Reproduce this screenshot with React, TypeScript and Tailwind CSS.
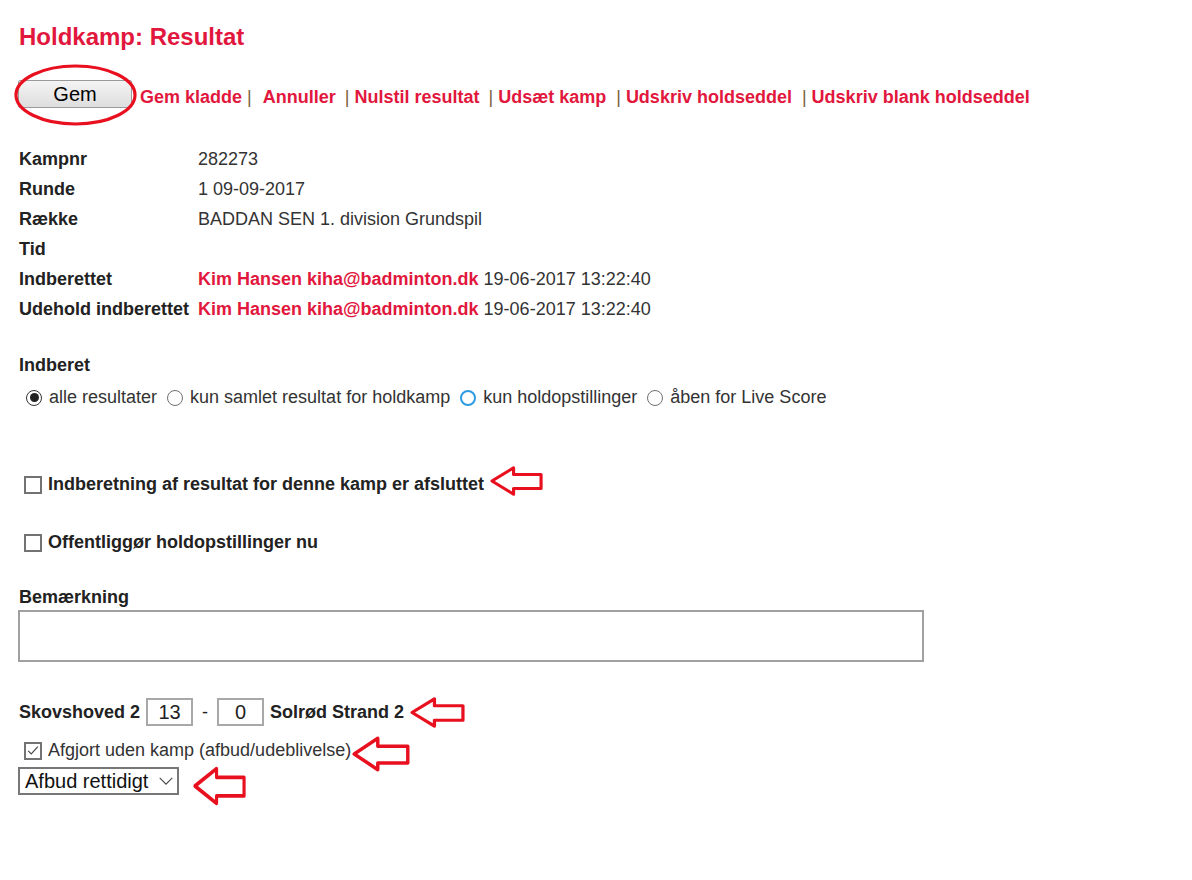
import React from "react";

const RED = "text-[#e2173d]";

function Arrow({ className }: { className: string }) {
  return (
    <svg className={`absolute ${className}`} viewBox="0 0 56 34" preserveAspectRatio="none">
      <polygon
        points="3,17 25,3 25,10 53,10 53,25 25,25 25,31"
        fill="none"
        stroke="#e8101f"
        strokeWidth="3.2"
        strokeLinejoin="round"
      />
    </svg>
  );
}

function Radio({ checked, tone }: { checked?: boolean; tone?: "blue" }) {
  const ring =
    tone === "blue" ? "border-2 border-[#2f9be0]" : checked ? "border-[1.5px] border-[#333]" : "border-[1.5px] border-[#707070]";
  return (
    <span className={`inline-flex h-[16px] w-[16px] items-center justify-center rounded-full bg-white ${ring}`}>
      {checked && <span className="h-[9px] w-[9px] rounded-full bg-[#222]" />}
    </span>
  );
}

function Box({ checked }: { checked?: boolean }) {
  return (
    <span className="inline-flex h-[18px] w-[18px] items-center justify-center border-2 border-[#737373] bg-white">
      {checked && (
        <svg viewBox="0 0 16 16" className="h-[15px] w-[15px]">
          <path d="M2.5 8.5l3.5 3.5 7.5-8.5" fill="none" stroke="#444" strokeWidth="1.3" />
        </svg>
      )}
    </span>
  );
}

const rows: [string, React.ReactNode][] = [
  ["Kampnr", "282273"],
  ["Runde", "1 09-09-2017"],
  ["Række", "BADDAN SEN 1. division Grundspil"],
  ["Tid", ""],
  [
    "Indberettet",
    <>
      <span className={`font-bold ${RED}`}>Kim Hansen kiha@badminton.dk</span> 19-06-2017 13:22:40
    </>,
  ],
  [
    "Udehold indberettet",
    <>
      <span className={`font-bold ${RED}`}>Kim Hansen kiha@badminton.dk</span> 19-06-2017 13:22:40
    </>,
  ],
];

const links = [
  ["Gem kladde", "ml-[5px] mr-[11px]"],
  ["Annuller", "ml-[9px] mr-[5px]"],
  ["Nulstil resultat", "ml-[9px] mr-[5px]"],
  ["Udsæt kamp", "ml-[10px] mr-[5px]"],
  ["Udskriv holdseddel", "ml-[10px] mr-[5px]"],
  ["Udskriv blank holdseddel", ""],
];

const radios: { label: string; checked?: boolean; tone?: "blue" }[] = [
  { label: "alle resultater", checked: true },
  { label: "kun samlet resultat for holdkamp" },
  { label: "kun holdopstillinger", tone: "blue" },
  { label: "åben for Live Score" },
];

export default function App() {
  return (
    <div
      className="relative min-h-[880px] bg-white pl-[19px] pt-[23px] text-[18px] leading-[21px] text-[#333]"
      style={{ fontFamily: '"Liberation Sans", Arial, sans-serif' }}
    >
      <h1 className={`text-[24px] font-bold leading-[28px] ${RED}`}>Holdkamp: Resultat</h1>

      {/* Toolbar */}
      <div className="mt-[29px] flex items-center">
        <button className="-ml-px h-[28px] w-[114px] rounded-[2px] border border-[#9a9a9a] bg-gradient-to-b from-[#f4f4f4] to-[#dedede] text-[20px] leading-[24px] text-black">
          Gem
        </button>
        <div className="ml-[8px] flex items-center pt-[6px]">
          {links.map(([label, gap], i) => (
            <React.Fragment key={i}>
              <span className={`font-bold ${RED}`}>{label}</span>
              {gap && <span className={`text-[#7a6040] ${gap}`}>|</span>}
            </React.Fragment>
          ))}
        </div>
      </div>

      {/* Info table */}
      <div className="mt-[36px] flex flex-col">
        {rows.map(([label, value]) => (
          <div key={label} className="flex h-[30px] items-center">
            <div className="w-[179px] font-bold text-[#222]">{label}</div>
            <div>{value}</div>
          </div>
        ))}
      </div>

      <div className="mt-[31px] font-bold text-[#222]">Indberet</div>
      <div className="mt-[11px] flex items-center pl-[7px]">
        {radios.map((r, i) => (
          <React.Fragment key={r.label}>
            <Radio checked={r.checked} tone={r.tone} />
            <span className={i < radios.length - 1 ? "ml-[7px] mr-[10px]" : "ml-[7px]"}>{r.label}</span>
          </React.Fragment>
        ))}
      </div>

      <div className="mt-[66px] flex items-center pl-[5px]">
        <Box />
        <span className="ml-[6px] font-bold text-[#222]">Indberetning af resultat for denne kamp er afsluttet</span>
      </div>
      <div className="mt-[37px] flex items-center pl-[5px]">
        <Box />
        <span className="ml-[6px] font-bold text-[#222]">Offentliggør holdopstillinger nu</span>
      </div>

      <div className="mt-[34px] font-bold text-[#222]">Bemærkning</div>
      <textarea className="-ml-px mt-[2px] block h-[52px] w-[906px] resize-none border-2 border-[#a0a0a0]" />

      {/* Score */}
      <div className="mt-[36px] flex items-center font-bold text-[#222]">
        <span>Skovshoved 2</span>
        <span className="ml-[6px] flex h-[28px] w-[47px] items-center justify-center border-2 border-[#a8a8a8] text-[20px] font-normal">
          13
        </span>
        <span className="mx-[9px] font-normal">-</span>
        <span className="flex h-[28px] w-[47px] items-center justify-center border-2 border-[#a8a8a8] text-[20px] font-normal">
          0
        </span>
        <span className="ml-[6px]">Solrød Strand 2</span>
      </div>
      <div className="mt-[14px] flex items-center pl-[5px]">
        <Box checked />
        <span className="ml-[6px]">Afgjort uden kamp (afbud/udeblivelse)</span>
      </div>
      <div className="-ml-px mt-[6px] flex h-[28px] w-[161px] items-center border-2 border-[#777] pl-[5px] text-[20px] text-[#111]">
        Afbud rettidigt
        <svg viewBox="0 0 16 10" className="ml-[10px] h-[9px] w-[16px]">
          <path d="M1 1l7 7 7-7" fill="none" stroke="#444" strokeWidth="1.2" />
        </svg>
      </div>

      {/* Annotations */}
      <svg className="absolute left-[14px] top-[64px] h-[62px] w-[123px]" viewBox="0 0 123 62">
        <ellipse cx="61.5" cy="31" rx="59.5" ry="29" fill="none" stroke="#e8101f" strokeWidth="3.2" />
      </svg>
      <Arrow className="left-[489px] top-[465px] h-[32px] w-[55px]" />
      <Arrow className="left-[409px] top-[696px] h-[33px] w-[57px]" />
      <Arrow className="left-[351px] top-[735px] h-[38px] w-[60px]" />
      <Arrow className="left-[192px] top-[765px] h-[42px] w-[55px]" />
    </div>
  );
}
